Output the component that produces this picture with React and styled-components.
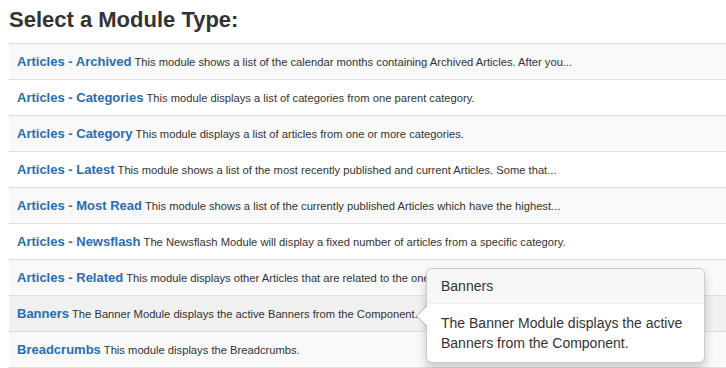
import React from "react";
import styled, { createGlobalStyle } from "styled-components";

const Global = createGlobalStyle`
  html, body { margin: 0; padding: 0; background: #fff; overflow: hidden; }
  body { font-family: "Liberation Sans", Arial, Helvetica, sans-serif; color: #333; }
`;

const Page = styled.div`
  display: flex;
  flex-direction: column;
  padding: 8px 0 0 9px;
  width: 760px;
`;

const Heading = styled.h2`
  margin: 0 0 11px;
  font-size: 22px;
  line-height: 24px;
  font-weight: bold;
  color: #333;
`;

const List = styled.div`
  display: flex;
  flex-direction: column;
  border-top: 1px solid #ddd;
`;

const Row = styled.div`
  position: relative;
  display: flex;
  align-items: baseline;
  gap: 3px;
  padding: 8px;
  height: 19px;
  line-height: 19px;
  border-bottom: 1px solid #ddd;
  background: ${(p) => (p.$hover ? "#f0f0f0" : p.$odd ? "#f9f9f9" : "#fff")};
  white-space: nowrap;
`;

const Title = styled.a`
  font-size: 13px;
  font-weight: bold;
  color: #2b6cb0;
  text-decoration: none;
`;

const Desc = styled.span`
  font-size: 11.2px;
  color: #333;
`;

const Popover = styled.div`
  position: absolute;
  left: 417px;
  top: -28px;
  width: 277px;
  background: #fff;
  border: 1px solid rgba(0, 0, 0, 0.2);
  border-radius: 6px;
  box-shadow: 0 5px 10px rgba(0, 0, 0, 0.2);
  white-space: normal;
  line-height: normal;
  z-index: 10;
`;

const PopTitle = styled.div`
  padding: 8px 14px;
  font-size: 14px;
  line-height: 18px;
  background: #f7f7f7;
  border-bottom: 1px solid #ebebeb;
  border-radius: 5px 5px 0 0;
  color: #333;
`;

const PopContent = styled.div`
  padding: 9px 14px;
  font-size: 14px;
  line-height: 20px;
  color: #333;
`;

const ArrowOuter = styled.div`
  position: absolute;
  top: 50%;
  left: -11px;
  margin-top: -11px;
  width: 0;
  height: 0;
  border-style: solid;
  border-width: 11px 11px 11px 0;
  border-color: transparent rgba(0, 0, 0, 0.25) transparent transparent;
`;

const ArrowInner = styled.div`
  position: absolute;
  top: 50%;
  left: -10px;
  margin-top: -10px;
  width: 0;
  height: 0;
  border-style: solid;
  border-width: 10px 10px 10px 0;
  border-color: transparent #fff transparent transparent;
`;

const modules = [
  ["Articles - Archived", "This module shows a list of the calendar months containing Archived Articles. After you..."],
  ["Articles - Categories", "This module displays a list of categories from one parent category."],
  ["Articles - Category", "This module displays a list of articles from one or more categories."],
  ["Articles - Latest", "This module shows a list of the most recently published and current Articles. Some that..."],
  ["Articles - Most Read", "This module shows a list of the currently published Articles which have the highest..."],
  ["Articles - Newsflash", "The Newsflash Module will display a fixed number of articles from a specific category."],
  ["Articles - Related", "This module displays other Articles that are related to the one currently being viewed."],
  ["Banners", "The Banner Module displays the active Banners from the Component."],
  ["Breadcrumbs", "This module displays the Breadcrumbs."],
];

export default function App() {
  return (
    <Page>
      <Global />
      <Heading>Select a Module Type:</Heading>
      <List>
        {modules.map(([t, d], i) => (
          <Row key={t} $odd={i % 2 === 0} $hover={t === "Banners"}>
            <Title href="#">{t}</Title>
            <Desc>{d}</Desc>
            {t === "Banners" && (
              <Popover>
                <ArrowOuter />
                <ArrowInner />
                <PopTitle>Banners</PopTitle>
                <PopContent>The Banner Module displays the active Banners from the Component.</PopContent>
              </Popover>
            )}
          </Row>
        ))}
      </List>
    </Page>
  );
}
